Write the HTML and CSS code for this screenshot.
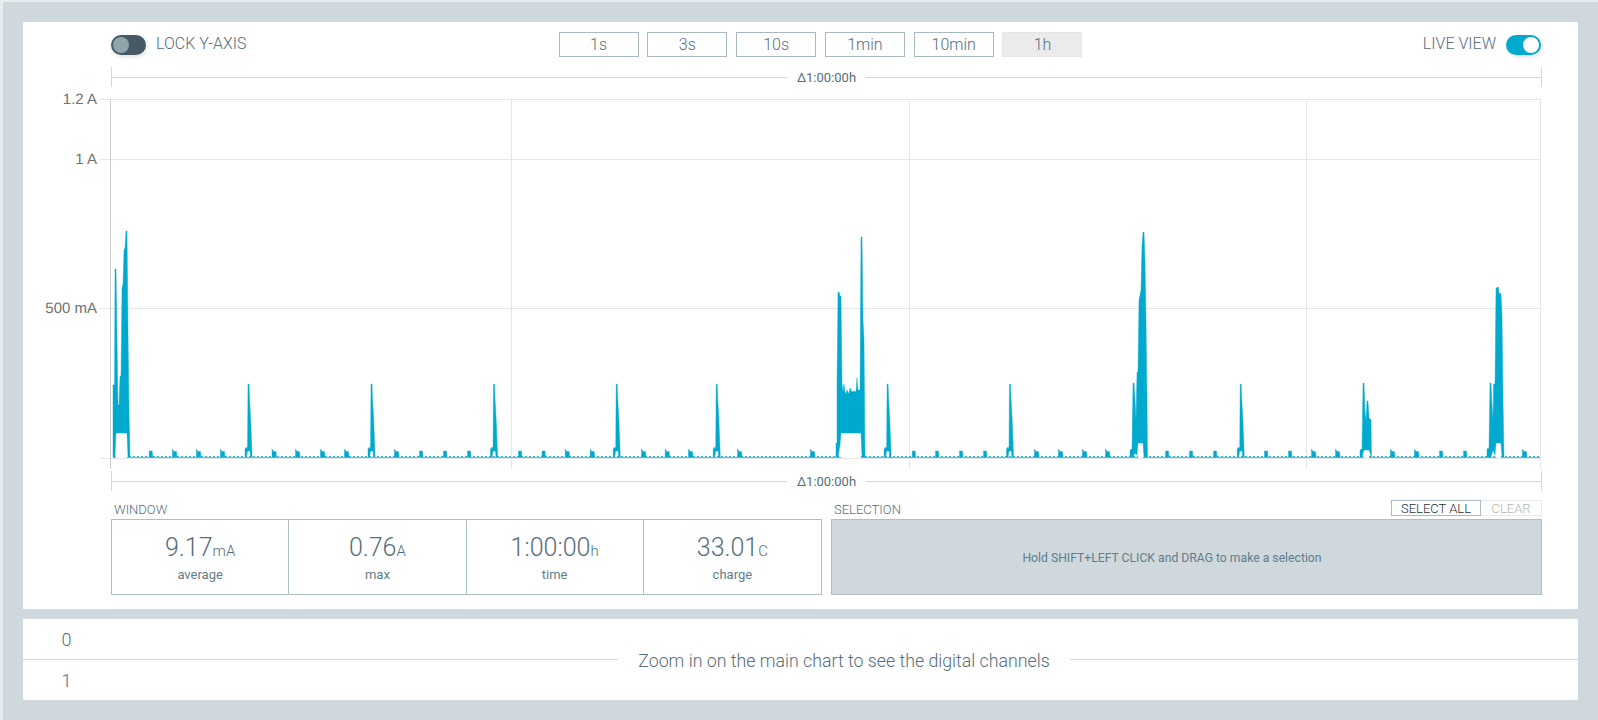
FILE: index.html
```html
<!DOCTYPE html>
<html lang="en">
<head>
    <meta charset="UTF-8">
    <title>Data Logger</title>
    <link rel="stylesheet" href="styles.css">
</head>
<body>

<div class="app">
    <div class="card main-card">
        <!-- Top controls -->
        <div class="controls">
            <label class="switch-label">
                <span class="toggle"><span class="knob"></span></span>
                <span class="switch-text">LOCK Y-AXIS</span>
            </label>
            <div class="window-buttons">
                <button>1s</button>
                <button>3s</button>
                <button>10s</button>
                <button>1min</button>
                <button>10min</button>
                <button class="active">1h</button>
            </div>
            <label class="switch-label live">
                <span class="switch-text">LIVE VIEW</span>
                <span class="toggle on"><span class="knob"></span></span>
            </label>
        </div>

        <div class="ruler ruler-top">
            <span class="line"></span>
            <span class="ruler-text">&Delta;1:00:00h</span>
            <span class="line"></span>
        </div>

        <!-- Main chart, coordinates are page pixels -->
        <svg class="chart" viewBox="23 90 1555 380" width="1555" height="380">
            <g class="grid">
                <line x1="100" y1="99.5" x2="1541" y2="99.5"></line>
                <line x1="100" y1="159.5" x2="1541" y2="159.5"></line>
                <line x1="100" y1="308.5" x2="1541" y2="308.5"></line>
                <line x1="100" y1="458.5" x2="1541" y2="458.5"></line>
                <line x1="511.5" y1="99" x2="511.5" y2="469"></line>
                <line x1="909.5" y1="99" x2="909.5" y2="469"></line>
                <line x1="1306.5" y1="99" x2="1306.5" y2="469"></line>
                <line x1="1540.5" y1="99" x2="1540.5" y2="469"></line>
                <line class="y-axis" x1="110.5" y1="99" x2="110.5" y2="469"></line>
            </g>
            <text class="tick" x="97" y="104">1.2 A</text>
            <text class="tick" x="97" y="164">1 A</text>
            <text class="tick" x="97" y="313">500 mA</text>
            <line class="base-glow" x1="113" y1="457.5" x2="1540" y2="457.5"></line>
            <line class="base-dots" x1="113" y1="456.5" x2="1540" y2="456.5"></line>
            <g id="holes"></g>
            <path id="trace" class="trace"></path>
        </svg>

        <div class="ruler ruler-bottom">
            <span class="line"></span>
            <span class="ruler-text">&Delta;1:00:00h</span>
            <span class="line"></span>
        </div>

        <!-- Statistics -->
        <div class="stats">
            <div class="stats-col">
                <div class="stats-head"><span class="stats-title">WINDOW</span></div>
                <div class="stat-box">
                    <div class="stat">
                        <div class="value">9.17<span class="unit">mA</span></div>
                        <div class="name">average</div>
                    </div>
                    <div class="stat">
                        <div class="value">0.76<span class="unit">A</span></div>
                        <div class="name">max</div>
                    </div>
                    <div class="stat">
                        <div class="value">1:00:00<span class="unit">h</span></div>
                        <div class="name">time</div>
                    </div>
                    <div class="stat">
                        <div class="value">33.01<span class="unit">C</span></div>
                        <div class="name">charge</div>
                    </div>
                </div>
            </div>
            <div class="stats-col">
                <div class="stats-head">
                    <span class="stats-title">SELECTION</span>
                    <div class="select-buttons">
                        <button class="select-all">SELECT ALL</button>
                        <button class="clear">CLEAR</button>
                    </div>
                </div>
                <div class="selection-box">Hold SHIFT+LEFT CLICK and DRAG to make a selection</div>
            </div>
        </div>
    </div>

    <!-- Digital channels -->
    <div class="card digital">
        <div class="channel first">0</div>
        <div class="channel">1</div>
        <div class="digital-msg">
            <span class="line"></span>
            <span class="msg-text">Zoom in on the main chart to see the digital channels</span>
            <span class="line"></span>
        </div>
    </div>
</div>

<script src="chart.js"></script>
</body>
</html>
```

FILE: styles.css
```css
* {
    box-sizing: border-box;
}
html, body {
    margin: 0;
    height: 100%;
    overflow: hidden;
}
body {
    font-family: Roboto, "Liberation Sans", sans-serif;
    color: #546e7a;
    background-color: #e8eced;
}
.app {
    height: 718px;
    margin: 2px 0 0 3px;
    padding: 20px 20px 20px 20px;
    background-color: #cfd8dc;
}
.card {
    background-color: white;
}
.main-card {
    height: 587px;
    padding-top: 10px;
}

.controls {
    display: grid;
    grid-template-columns: 1fr auto 1fr;
    align-items: center;
    height: 25px;
    margin: 0 37px 0 88px;
}
.switch-label {
    display: flex;
    align-items: center;
    gap: 10px;
    font-size: 16px;
    font-weight: 300;
}
.switch-label.live {
    justify-content: flex-end;
}
.switch-text {
    padding-bottom: 2px;
}
.toggle {
    display: flex;
    align-items: center;
    width: 35px;
    height: 20px;
    padding: 0 2px;
    border-radius: 10px;
    background-color: #455a64;
    box-shadow: 1px 2px 4px rgba(0, 0, 0, 0.12);
}
.toggle.on {
    justify-content: flex-end;
    background-color: #00a9ce;
}
.knob {
    width: 16px;
    height: 16px;
    border-radius: 50%;
    background-color: #90a4ae;
}
.toggle.on .knob {
    background-color: white;
}
.window-buttons {
    display: flex;
    gap: 8.8px;
    margin-left: -11px;
}
.window-buttons button {
    width: 80px;
    height: 25px;
    padding: 0;
    font-family: inherit;
    font-size: 16px;
    font-weight: 300;
    color: #546e7a;
    background-color: white;
    border: 1px solid #a7b9c1;
}
.window-buttons button.active {
    background-color: #ebebeb;
    border-color: #e6e6e6;
}

.ruler {
    display: flex;
    align-items: center;
    height: 20px;
    margin: 0 36px 0 88px;
    border-left: 1px solid #cfd8dc;
    border-right: 1px solid #cfd8dc;
    font-size: 13px;
}
.ruler-top {
    margin-top: 10px;
    margin-bottom: 3px;
}
.ruler-bottom {
    margin-top: 1px;
}
.ruler-text {
    padding: 0 10px;
}
.line {
    flex: 1;
    height: 1px;
    background-color: #cfd8dc;
}

.chart {
    display: block;
}
.grid line {
    stroke: #e4e6e7;
    stroke-width: 1;
}
.grid .y-axis {
    stroke: #cdcdcd;
}
.tick {
    font-family: "Liberation Sans", sans-serif;
    font-size: 15px;
    fill: #707070;
    text-anchor: end;
    text-rendering: geometricPrecision;
}
.base-glow {
    stroke: #4fc3dc;
    stroke-width: 1;
}
.base-dots {
    stroke: #00a9ce;
    stroke-opacity: 0.8;
    stroke-width: 1;
    stroke-dasharray: 2 2;
}
.trace {
    fill: #00a9ce;
    stroke: #00a9ce;
    stroke-opacity: 0.4;
    stroke-width: 1;
}

.stats {
    display: grid;
    grid-template-columns: 711px 711px;
    gap: 9px;
    margin: 9px 0 0 88px;
}
.stats-head {
    display: flex;
    align-items: flex-end;
    justify-content: space-between;
    height: 19px;
}
.stats-title {
    padding: 0 0 2px 3px;
    font-size: 13px;
    font-weight: 300;
}
.select-buttons {
    display: flex;
    margin-bottom: 3px;
}
.select-buttons button {
    height: 16px;
    padding: 0;
    font-family: inherit;
    font-size: 13px;
    font-weight: 300;
    background-color: white;
    border: 1px solid #a7bcc5;
}
.select-all {
    width: 90px;
    color: #263238;
}
.select-buttons .clear {
    width: 61px;
    color: #b5b5b5;
    border-color: #e6eaec;
    border-left: none;
}
.stat-box {
    display: grid;
    grid-template-columns: repeat(4, 1fr);
    height: 76px;
    border: 1px solid #b0bec5;
}
.stat {
    padding-top: 13px;
    text-align: center;
    border-right: 1px solid #b0bec5;
}
.stat:last-child {
    border-right: none;
}
.value {
    font-size: 25px;
    font-weight: 300;
    line-height: 30px;
}
.unit {
    font-size: 15px;
}
.name {
    margin-top: 1px;
    font-size: 13px;
    line-height: 16px;
    color: #607d8b;
}
.selection-box {
    display: flex;
    align-items: center;
    justify-content: center;
    height: 76px;
    padding: 2px 29px 0 0;
    font-size: 12.2px;
    color: #607d8b;
    background-color: #cfd8dc;
    border: 1px solid #b0bec5;
}

.digital {
    display: grid;
    grid-template-columns: 87px 1fr;
    grid-template-rows: 41px 40px;
    margin-top: 10px;
}
.channel {
    display: flex;
    align-items: center;
    justify-content: center;
    grid-column: 1;
    font-size: 18px;
    font-weight: 300;
}
.channel.first {
    border-bottom: 1px solid #cfd8dc;
}
.digital-msg {
    display: flex;
    align-items: center;
    grid-column: 2;
    grid-row: 1 / 3;
}
.msg-text {
    padding: 2px 20px 0;
    font-size: 17.75px;
    font-weight: 300;
}
```

FILE: chart.js
```js
const bursts = [
    'M113 457L113 385L114.5 385L115 269L116 269L117 340L118 405L119 405L120 376L121 376L122 288L123 284L124 250L125 248L126 231L127 231L128 330L129 410L130 457L128 457L127 433L116 433L115 457Z',
    'M836 457L836 443L837 443L837 384L838 292L839 292L840 296L841 296L842 384L843 392L844 384L845 392L846 394L847 390L849 394L850 388L852 392L854 391L856 392L857 378L858 390L860 390L861 237L862 237L863 320L864 340L865 457L862 457L861 433L841 433L840 445L838 457Z',
    'M1130 457L1130 450L1132 449L1133 383L1134 383L1135 400L1136 420L1137 372L1138 372L1139 300L1141 290L1142 245L1143 232L1144 232L1145 260L1146 320L1147 400L1147.5 457L1144 457L1143 443L1138 443L1137 455L1135 453L1133 457Z',
    'M1360 457L1360 450L1362 449L1363 383L1364 383L1365 412L1366 420L1367 401L1368 401L1369 418L1371 420L1371.5 457L1369 450L1364 450L1362 457Z',
    'M1487 457L1487 449L1489 448L1490 383L1491 383L1492 405L1493 420L1493.5 384L1495 384L1496 288L1498.5 287L1499 293L1501 294L1502 315L1503 400L1504 457L1502 457L1501 443L1496 443L1495 455L1493 450L1491 457Z'
];

// Single spikes every couple of minutes
const spikes = [248.5, 371.5, 494, 616.7, 716.7, 887.6, 1010, 1240.7];

// Small blips: flat ones are drawn as a box, the others with a little peak
const flat = [150.7, 421, 445, 469, 520, 543.5, 913.7, 937, 961, 985, 1167, 1191, 1215, 1266, 1290, 1441, 1465];
const peaked = [174, 198, 222, 273.5, 297, 322, 346, 396, 566.7, 591.7, 643, 666.7, 690, 739, 812, 1036, 1060, 1084, 1107, 1313, 1337, 1392, 1416, 1524];

// Stretches with no baseline under a burst
const holes = [[116, 127], [841, 861], [1138, 1143], [1364, 1369], [1496, 1501]];

function spikePath(x, top) {
    return `M${x - 3.5} 457L${x - 3.5} 449L${x - 2} 447L${x - 1} 449L${x - 0.5} ${top}L${x + 0.5} ${top}L${x + 1} ${top + 14}` +
        `L${x + 2.2} ${top + 36}L${x + 3.5} ${top + 70}L${x + 3.5} 457L${x + 2} 457L${x + 1.5} 451L${x - 1} 451L${x - 2} 457Z`;
}

function flatPath(x) {
    return `M${x - 1.5} 457L${x - 1.5} 451L${x + 1.5} 451L${x + 2} 457Z`;
}

function peakPath(x) {
    return `M${x - 1.5} 457L${x - 1.5} 449L${x} 451.5L${x + 2.5} 451.5L${x + 3} 457Z`;
}

let d = bursts.join('');
spikes.forEach(x => { d += spikePath(x, 384); });
flat.forEach(x => { d += flatPath(x); });
peaked.forEach(x => { d += peakPath(x); });
document.getElementById('trace').setAttribute('d', d);

const holeGroup = document.getElementById('holes');
holes.forEach(hole => {
    const rect = document.createElementNS('http://www.w3.org/2000/svg', 'rect');
    rect.setAttribute('x', hole[0]);
    rect.setAttribute('y', 452);
    rect.setAttribute('width', hole[1] - hole[0]);
    rect.setAttribute('height', 6);
    rect.setAttribute('fill', 'white');
    holeGroup.appendChild(rect);
});
```
